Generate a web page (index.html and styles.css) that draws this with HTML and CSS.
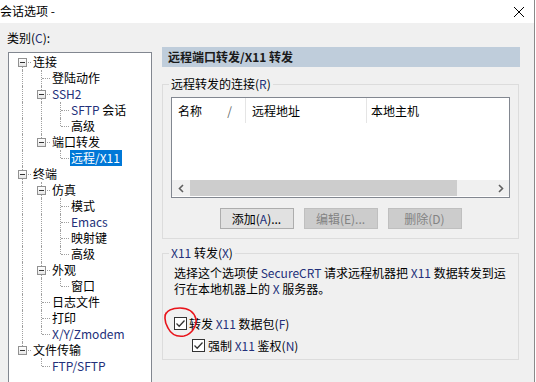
FILE: index.html
```
<!DOCTYPE html>
<html lang="zh-CN">
<head>
    <meta charset="UTF-8">
    <title>会话选项</title>
    <link rel="stylesheet" href="styles.css">
</head>
<body>

<div class="window">
    <!-- Title bar -->
    <div class="titlebar">
        <span class="title">会话选项 -</span>
        <svg class="close" width="10" height="10" viewBox="0 0 10 10"><path d="M0 0L10 10M10 0L0 10" stroke="#000" stroke-width="1"/></svg>
    </div>

    <div class="main">
        <!-- Category tree -->
        <div class="category">
            <div class="cat-label">类别(<span class="en">C</span>):</div>
            <div class="tree">
                <div class="row"><span class="g first"><b class="box"></b></span><span class="label">连接</span></div>
                <div class="row"><span class="g line"></span><span class="g tee"></span><span class="label">登陆动作</span></div>
                <div class="row"><span class="g line"></span><span class="g tee"><b class="box"></b></span><span class="label en">SSH2</span></div>
                <div class="row"><span class="g line"></span><span class="g line"></span><span class="g tee"></span><span class="label"><span class="en">SFTP</span> 会话</span></div>
                <div class="row"><span class="g line"></span><span class="g line"></span><span class="g ell"></span><span class="label">高级</span></div>
                <div class="row"><span class="g line"></span><span class="g ell"><b class="box"></b></span><span class="label">端口转发</span></div>
                <div class="row"><span class="g line"></span><span class="g"></span><span class="g ell"></span><span class="label sel">远程/X11</span></div>
                <div class="row"><span class="g tee"><b class="box"></b></span><span class="label">终端</span></div>
                <div class="row"><span class="g line"></span><span class="g tee"><b class="box"></b></span><span class="label">仿真</span></div>
                <div class="row"><span class="g line"></span><span class="g line"></span><span class="g tee"></span><span class="label">模式</span></div>
                <div class="row"><span class="g line"></span><span class="g line"></span><span class="g tee"></span><span class="label en">Emacs</span></div>
                <div class="row"><span class="g line"></span><span class="g line"></span><span class="g tee"></span><span class="label">映射键</span></div>
                <div class="row"><span class="g line"></span><span class="g line"></span><span class="g ell"></span><span class="label">高级</span></div>
                <div class="row"><span class="g line"></span><span class="g tee"><b class="box"></b></span><span class="label">外观</span></div>
                <div class="row"><span class="g line"></span><span class="g line"></span><span class="g ell"></span><span class="label">窗口</span></div>
                <div class="row"><span class="g line"></span><span class="g tee"></span><span class="label">日志文件</span></div>
                <div class="row"><span class="g line"></span><span class="g tee"></span><span class="label">打印</span></div>
                <div class="row"><span class="g line"></span><span class="g ell"></span><span class="label en">X/Y/Zmodem</span></div>
                <div class="row"><span class="g ell"><b class="box"></b></span><span class="label">文件传输</span></div>
                <div class="row"><span class="g"></span><span class="g ell"></span><span class="label en">FTP/SFTP</span></div>
            </div>
        </div>

        <!-- Settings panel -->
        <div class="panel">
            <div class="panel-head">远程端口转发/X11 转发</div>

            <fieldset class="group">
                <legend>远程转发的连接(<span class="en">R</span>)</legend>
                <div class="list">
                    <div class="list-head">
                        <div class="col col-name"><span>名称</span><span class="sort">/</span></div>
                        <div class="col col-remote">远程地址</div>
                        <div class="col col-local">本地主机</div>
                    </div>
                    <div class="list-body"></div>
                    <div class="hscroll">
                        <span class="arrow"><svg width="6" height="9" viewBox="0 0 6 9"><path d="M5 1L1.5 4.5L5 8" fill="none" stroke="#606060" stroke-width="1.6"/></svg></span>
                        <span class="track"><span class="thumb"></span></span>
                        <span class="arrow"><svg width="6" height="9" viewBox="0 0 6 9"><path d="M1 1L4.5 4.5L1 8" fill="none" stroke="#606060" stroke-width="1.6"/></svg></span>
                    </div>
                </div>
                <div class="buttons">
                    <button class="btn">添加(<span class="en">A</span>)...</button>
                    <button class="btn" disabled>编辑(E)...</button>
                    <button class="btn" disabled>删除(D)</button>
                </div>
            </fieldset>

            <fieldset class="group x11">
                <legend><span class="en">X11</span> 转发(<span class="en">X</span>)</legend>
                <p class="desc">选择这个选项使 <span class="en">SecureCRT</span> 请求远程机器把 <span class="en">X11</span> 数据转发到运<br>行在本地机器上的 <span class="en">X</span> 服务器。</p>
                <div class="check-row">
                    <span class="cb"><svg width="11" height="11" viewBox="0 0 11 11"><path d="M1.5 5.5L4.2 8.2L9.5 2.5" fill="none" stroke="#333" stroke-width="1.3"/></svg></span>
                    <span>转发 <span class="en">X11</span> 数据包(<span class="en">F</span>)</span>
                    <svg class="mark" width="36" height="32" viewBox="0 0 36 32"><path d="M2 8C4 3 10 1 17 1C25 1 31 5 33 12C34 19 29 27 21 29C14 30 8 27 5 21C2 16 1 11 3 6" fill="none" stroke="#e8141b" stroke-width="1.6" stroke-linecap="round"/></svg>
                </div>
                <div class="check-row sub">
                    <span class="cb"><svg width="11" height="11" viewBox="0 0 11 11"><path d="M1.5 5.5L4.2 8.2L9.5 2.5" fill="none" stroke="#333" stroke-width="1.3"/></svg></span>
                    <span>强制 <span class="en">X11</span> 鉴权(<span class="en">N</span>)</span>
                </div>
            </fieldset>
        </div>
    </div>
</div>

</body>
</html>
```

FILE: styles.css
```
/* General */
body {
    margin: 0;
    width: 536px;
    height: 382px;
    overflow: hidden;
    background: #ffffff;
    font-family: "Noto Sans CJK SC", sans-serif;
    font-size: 12px;
    color: #000;
}

.en {
    color: #23307a;
}

.window {
    width: 534px;
    height: 382px;
    border-right: 1px solid #8a8a8a;
    background: #f0f0f0;
    display: flex;
    flex-direction: column;
}

/* Title bar */
.titlebar {
    height: 23px;
    flex: none;
    background: #fff;
    display: flex;
    align-items: center;
    justify-content: space-between;
    padding-right: 10px;
}

.title {
    line-height: 16px;
    margin-bottom: 1px;
}

.main {
    flex: 1;
    display: flex;
    min-height: 0;
}

/* Category tree */
.category {
    width: 162px;
    flex: none;
    box-sizing: border-box;
    padding: 7px 0 0 7px;
    display: flex;
    flex-direction: column;
}

.cat-label {
    line-height: 16px;
    margin-bottom: 6px;
}

.tree {
    flex: 1;
    width: 144px;
    margin-left: 1px;
    box-sizing: border-box;
    background: #fff;
    border: 1px solid #828790;
    border-bottom: none;
    padding: 1px 0 0 4px;
}

.row {
    display: flex;
    height: 16px;
}

.g {
    position: relative;
    width: 19px;
    height: 16px;
    flex: none;
}

.g::before,
.g::after {
    content: "";
    position: absolute;
}

.line::before,
.tee::before {
    left: 9px;
    top: 0;
    bottom: 0;
    border-left: 1px dotted #a0a0a0;
}

.ell::before {
    left: 9px;
    top: 0;
    height: 8px;
    border-left: 1px dotted #a0a0a0;
}

.first::before {
    left: 9px;
    top: 8px;
    bottom: 0;
    border-left: 1px dotted #a0a0a0;
}

.tee::after,
.ell::after,
.first::after {
    left: 10px;
    top: 8px;
    width: 8px;
    border-top: 1px dotted #a0a0a0;
}

.box {
    position: absolute;
    left: 5px;
    top: 4px;
    width: 9px;
    height: 9px;
    box-sizing: border-box;
    border: 1px solid #919191;
    background: linear-gradient(#ffffff, #e6e6e6);
    z-index: 1;
}

.box::after {
    content: "";
    position: absolute;
    left: 1px;
    top: 3px;
    width: 5px;
    height: 1px;
    background: #333;
}

.label {
    line-height: 16px;
    padding: 0 2px 0 1px;
    white-space: nowrap;
}

.label.sel {
    background: #0078d7;
    color: #fff;
}

/* Right panel */
.panel {
    width: 358px;
    flex: none;
    padding-top: 24px;
}

.panel-head {
    height: 20px;
    line-height: 20px;
    background: #bfcddb;
    padding-left: 6px;
    font-weight: bold;
    color: #1a1a1a;
}

.group {
    margin: 10px 1px 0 0;
    padding: 6px 8px 9px;
    border: 1px solid #dcdcdc;
    min-width: 0;
}

.group legend {
    padding: 0 2px;
    margin-left: -2px;
    line-height: 14px;
}

.list {
    height: 101px;
    box-sizing: border-box;
    border: 1px solid #828790;
    background: #fff;
    display: flex;
    flex-direction: column;
}

.list-head {
    display: flex;
    height: 25px;
    flex: none;
}

.col {
    line-height: 25px;
    box-sizing: border-box;
    padding-left: 6px;
}

.col-name {
    width: 74px;
    display: flex;
    justify-content: space-between;
    padding-right: 13px;
    border-right: 1px solid #e5e5e5;
}

.sort {
    color: #666;
}

.col-remote {
    width: 121px;
    border-right: 1px solid #e5e5e5;
}

.col-local {
    padding-left: 4px;
}

.list-body {
    flex: 1;
}

.hscroll {
    height: 16px;
    flex: none;
    display: flex;
    background: #f0f0f0;
    margin-bottom: 1px;
}

.arrow {
    width: 17px;
    display: flex;
    align-items: center;
    justify-content: center;
    flex: none;
}

.track {
    flex: 1;
    padding-left: 1px;
    display: flex;
}

.thumb {
    width: 267px;
    background: #cdcdcd;
}

.buttons {
    display: flex;
    justify-content: center;
    gap: 10px;
    margin-top: 10px;
}

.btn {
    width: 74px;
    height: 21px;
    padding: 0;
    font-family: "Noto Sans CJK SC", sans-serif;
    font-size: 12px;
    line-height: 19px;
    background: #e1e1e1;
    border: 1px solid #adadad;
    color: #000;
}

.btn:disabled {
    background: #cccccc;
    border-color: #bfbfbf;
    color: #838383;
}

/* X11 group */
.group.x11 {
    margin-top: 7px;
    padding: 5px 8px 6px;
}

.desc {
    margin: 0;
    padding-left: 3px;
    line-height: 16px;
}

.check-row {
    position: relative;
    display: flex;
    align-items: center;
    height: 16px;
    margin-top: 18px;
    padding-left: 3px;
    gap: 2px;
}

.check-row.sub {
    margin-top: 6px;
    padding-left: 21px;
    gap: 3px;
}

.cb {
    width: 13px;
    height: 13px;
    box-sizing: border-box;
    border: 1px solid #333;
    background: #fff;
    display: flex;
    align-items: center;
    justify-content: center;
    flex: none;
}

.mark {
    position: absolute;
    left: -8px;
    top: -8px;
}
```
